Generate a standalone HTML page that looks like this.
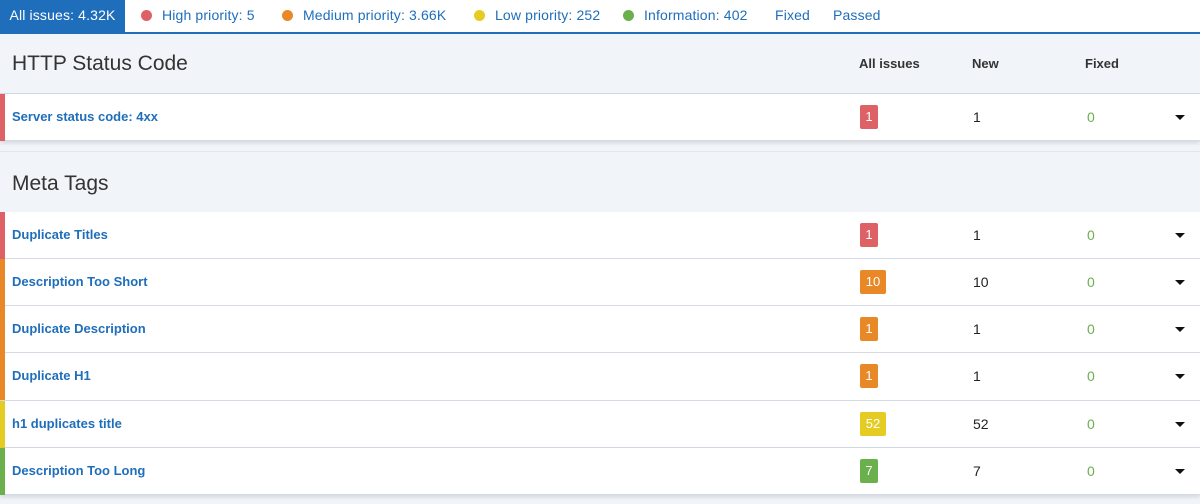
<!DOCTYPE html><html><head><style>
body{margin:0;width:1200px;height:504px;background:#f1f4f9;font-family:"Liberation Sans",sans-serif;position:relative;overflow:hidden}
.tabs{position:absolute;left:0;top:0;width:1200px;height:32px;background:#fff;border-bottom:2px solid #1f6ebb;font-size:14px;color:#1f6ebb}
.tab{position:absolute;top:0;height:32px;line-height:31px;white-space:nowrap;letter-spacing:.15px}
.dot{display:inline-block;width:11px;height:11px;border-radius:50%;vertical-align:-1px;margin-right:10px}
.hdr{position:absolute;left:0;width:1200px;background:#f1f4f9;border-bottom:1px solid #d5dbe4}
.hdr .t{position:absolute;left:12px;font-size:21px;color:#333}
.ch{position:absolute;font-size:13px;font-weight:bold;color:#333;top:22px}
.row{position:absolute;left:0;width:1200px;height:46px;background:#fff;border-bottom:1px solid #d5dbe4}
.bar{position:absolute;left:0;top:0;width:5px;height:47px}
.name{position:absolute;left:12px;top:15px;font-size:13px;font-weight:bold;color:#1f6ebb}
.b{position:absolute;left:860px;top:11px;height:24px;line-height:24px;border-radius:2px;color:#fff;font-size:13px;text-align:center}
.n{position:absolute;left:973px;top:15px;font-size:14px;color:#222}
.f{position:absolute;left:1087px;top:15px;font-size:14px;color:#6ab04c}
.c{position:absolute;left:1175px;top:21px;width:0;height:0;border-left:5px solid transparent;border-right:5px solid transparent;border-top:5px solid #111}
</style></head><body>
<div class="tabs">
<div class="tab" style="left:0;width:125px;background:#1f6ebb;color:#fff;text-align:center">All issues: 4.32K</div>
<div class="tab" style="left:141px"><span class="dot" style="background:#dd6165"></span>High priority: 5</div>
<div class="tab" style="left:282px"><span class="dot" style="background:#e88826"></span>Medium priority: 3.66K</div>
<div class="tab" style="left:474px"><span class="dot" style="background:#e5cc23"></span>Low priority: 252</div>
<div class="tab" style="left:623px"><span class="dot" style="background:#6ab04c"></span>Information: 402</div>
<div class="tab" style="left:775px">Fixed</div>
<div class="tab" style="left:833px">Passed</div>
</div>
<div class="hdr" style="top:34px;height:59px"><div class="t" style="top:18px">HTTP Status Code</div>
<div class="ch" style="left:859px">All issues</div><div class="ch" style="left:972px">New</div><div class="ch" style="left:1085px">Fixed</div></div>
<div class="row" style="top:94px;box-shadow:0 2px 4px rgba(0,0,0,.12)"><div class="bar" style="background:#dd6165"></div><div class="name">Server status code: 4xx</div><div class="b" style="background:#dd6165;width:18px">1</div><div class="n">1</div><div class="f">0</div><div class="c"></div></div>
<div class="hdr" style="top:151px;height:60px;border-top:1px solid #e2e6ed"><div class="t" style="top:20px">Meta Tags</div></div>

<div class="row" style="top:212px"><div class="bar" style="background:#dd6165"></div><div class="name">Duplicate Titles</div><div class="b" style="background:#dd6165;width:18px">1</div><div class="n">1</div><div class="f">0</div><div class="c"></div></div>
<div class="row" style="top:259px"><div class="bar" style="background:#e88826"></div><div class="name">Description Too Short</div><div class="b" style="background:#e88826;width:26px">10</div><div class="n">10</div><div class="f">0</div><div class="c"></div></div>
<div class="row" style="top:306px"><div class="bar" style="background:#e88826"></div><div class="name">Duplicate Description</div><div class="b" style="background:#e88826;width:18px">1</div><div class="n">1</div><div class="f">0</div><div class="c"></div></div>
<div class="row" style="top:353px;height:47px"><div class="bar" style="background:#e88826"></div><div class="name">Duplicate H1</div><div class="b" style="background:#e88826;width:18px">1</div><div class="n">1</div><div class="f">0</div><div class="c"></div></div>
<div class="row" style="top:401px"><div class="bar" style="background:#e5cc23"></div><div class="name">h1 duplicates title</div><div class="b" style="background:#e5cc23;width:26px">52</div><div class="n">52</div><div class="f">0</div><div class="c"></div></div>
<div class="row" style="top:448px;box-shadow:0 2px 4px rgba(0,0,0,.12)"><div class="bar" style="background:#6ab04c"></div><div class="name">Description Too Long</div><div class="b" style="background:#6ab04c;width:18px">7</div><div class="n">7</div><div class="f">0</div><div class="c"></div></div>
</body></html>
